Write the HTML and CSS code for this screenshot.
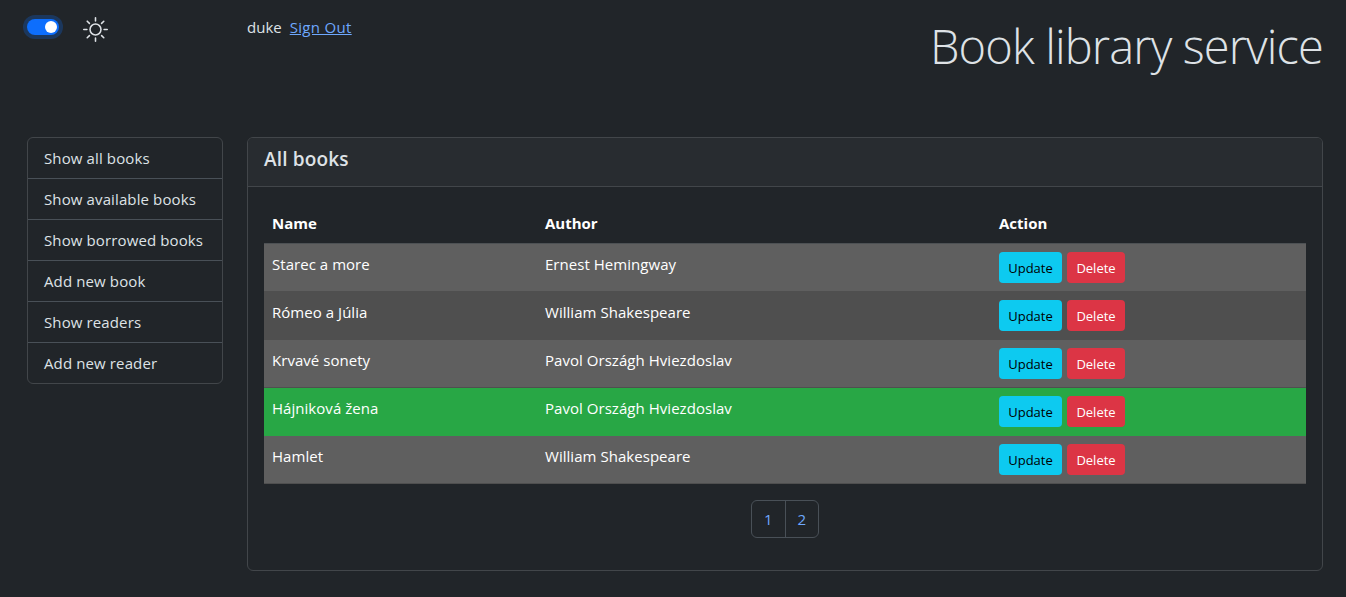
FILE: index.html
```html
<!DOCTYPE html>
<html lang="en">
<head>
<meta charset="utf-8">
<title>Book library service</title>
<link rel="stylesheet" href="styles.css">
</head>
<body>
<header class="top">
  <div class="theme">
    <span class="switch" role="switch" aria-checked="true"><span class="knob"></span></span>
    <svg class="sun" viewBox="0 0 16 16" fill="currentColor"><path d="M8 11a3 3 0 1 1 0-6 3 3 0 0 1 0 6m0 1a4 4 0 1 0 0-8 4 4 0 0 0 0 8M8 0a.5.5 0 0 1 .5.5v2a.5.5 0 0 1-1 0v-2A.5.5 0 0 1 8 0m0 13a.5.5 0 0 1 .5.5v2a.5.5 0 0 1-1 0v-2A.5.5 0 0 1 8 13m8-5a.5.5 0 0 1-.5.5h-2a.5.5 0 0 1 0-1h2a.5.5 0 0 1 .5.5M3 8a.5.5 0 0 1-.5.5h-2a.5.5 0 0 1 0-1h2A.5.5 0 0 1 3 8m10.657-5.657a.5.5 0 0 1 0 .707l-1.414 1.415a.5.5 0 1 1-.707-.708l1.414-1.414a.5.5 0 0 1 .707 0m-9.193 9.193a.5.5 0 0 1 0 .707L3.05 13.657a.5.5 0 0 1-.707-.707l1.414-1.414a.5.5 0 0 1 .707 0m9.193 2.121a.5.5 0 0 1-.707 0l-1.414-1.414a.5.5 0 0 1 .707-.707l1.414 1.414a.5.5 0 0 1 0 .707M4.464 4.465a.5.5 0 0 1-.707 0L2.343 3.05a.5.5 0 1 1 .707-.707l1.414 1.414a.5.5 0 0 1 0 .708"/></svg>
  </div>
  <div class="user"><span class="name">duke</span><a class="signout" href="#">Sign Out</a></div>
  <h1 class="title">Book library service</h1>
</header>
<main class="main">
  <nav class="menu">
    <a class="item" href="#">Show all books</a>
    <a class="item" href="#">Show available books</a>
    <a class="item" href="#">Show borrowed books</a>
    <a class="item" href="#">Add new book</a>
    <a class="item" href="#">Show readers</a>
    <a class="item" href="#">Add new reader</a>
  </nav>
  <section class="card">
    <div class="card-header"><h5 class="card-title">All books</h5></div>
    <div class="card-body">
      <table class="books">
        <colgroup><col class="c-name"><col class="c-author"><col></colgroup>
        <thead><tr><th>Name</th><th>Author</th><th>Action</th></tr></thead>
        <tbody>
          <tr><td>Starec a more</td><td>Ernest Hemingway</td><td><div class="actions"><button class="btn info">Update</button><button class="btn danger">Delete</button></div></td></tr>
          <tr><td>Rómeo a Júlia</td><td>William Shakespeare</td><td><div class="actions"><button class="btn info">Update</button><button class="btn danger">Delete</button></div></td></tr>
          <tr><td>Krvavé sonety</td><td>Pavol Országh Hviezdoslav</td><td><div class="actions"><button class="btn info">Update</button><button class="btn danger">Delete</button></div></td></tr>
          <tr class="selected"><td>Hájniková žena</td><td>Pavol Országh Hviezdoslav</td><td><div class="actions"><button class="btn info">Update</button><button class="btn danger">Delete</button></div></td></tr>
          <tr><td>Hamlet</td><td>William Shakespeare</td><td><div class="actions"><button class="btn info">Update</button><button class="btn danger">Delete</button></div></td></tr>
        </tbody>
      </table>
      <div class="pages"><a class="page" href="#">1</a><a class="page" href="#">2</a></div>
    </div>
  </section>
</main>
</body>
</html>
```
FILE: styles.css
```css
* { box-sizing: border-box; }
body {
  margin: 0;
  height: 597px;
  overflow: hidden;
  background: #212529;
  color: #dee2e6;
  font-family: "Open Sans", "Noto Sans", sans-serif;
  font-size: 15px;
  line-height: 24px;
}
a { color: inherit; text-decoration: none; }
.top {
  display: grid;
  grid-template-columns: 220px auto 1fr;
  height: 137px;
  padding: 0 23px 0 27px;
  align-items: start;
}
.theme { display: flex; gap: 24px; }
.switch {
  display: flex;
  justify-content: flex-end;
  align-items: center;
  width: 32px;
  height: 16px;
  margin-top: 19px;
  padding-right: 2px;
  border-radius: 8px;
  background: #0d6efd;
  box-shadow: 0 0 0 4px rgba(13, 110, 253, .25);
}
.knob { width: 12px; height: 12px; border-radius: 50%; background: #fff; }
.sun { width: 25px; height: 25px; margin-top: 17px; }
.user { display: flex; gap: 8px; padding-top: 15px; }
.signout { color: #6ea8fe; text-decoration: underline; letter-spacing: .32px; }
.title {
  margin: 17px 0 0;
  font-size: 47px;
  font-weight: 300;
  line-height: 58px;
  letter-spacing: -.87px;
  text-align: right;
  white-space: nowrap;
}
.main {
  display: grid;
  grid-template-columns: 196px 1fr;
  gap: 24px;
  align-items: start;
  padding: 0 23px 0 27px;
}
.menu { border: 1px solid #42464a; border-radius: 6px; }
.item { display: block; padding: 8px 16px; white-space: nowrap; letter-spacing: .12px; }
.item + .item { border-top: 1px solid #495057; }
.card { border: 1px solid #42464a; border-radius: 6px; overflow: hidden; }
.card-header { height: 49px; padding: 8px 16px; background: #282c30; border-bottom: 1px solid #42464a; }
.card-title { margin: 0; font-size: 19px; font-weight: 600; line-height: 26px; letter-spacing: .15px; }
.card-body { padding: 16px 16px 32px; }
.books { width: 100%; table-layout: fixed; border-collapse: separate; border-spacing: 0; color: #fff; }
.c-name { width: 273px; }
.c-author { width: 454px; }
th { height: 41px; padding: 8px; text-align: left; font-weight: 700; border-bottom: 1px solid #4d5154; }
td { height: 48px; padding: 8px 8px 0; vertical-align: top; background: #5f5f5f; border-bottom: 1px solid #4f4f4f; letter-spacing: .04px; }
tr:nth-child(even) td { background: #4f4f4f; }
tr.selected:nth-child(even) td { background: #28a745; border-color: #28a745; }
.actions { display: flex; gap: 5px; }
.btn {
  height: 31px;
  padding: 1px 0 0;
  border: 0;
  border-radius: 4px;
  font: 13px/30px "Open Sans", "Noto Sans", sans-serif;
}
.info { width: 63px; background: #0dcaf0; color: #000; }
.danger { width: 58px; background: #dc3545; color: #fff; }
.pages {
  display: flex;
  width: 68px;
  height: 38px;
  margin: 16px auto 0;
  border: 1px solid #495057;
  border-radius: 6px;
}
.page { flex: 1; padding: 6px 0; text-align: center; color: #6ea8fe; }
.page + .page { border-left: 1px solid #495057; }
```
